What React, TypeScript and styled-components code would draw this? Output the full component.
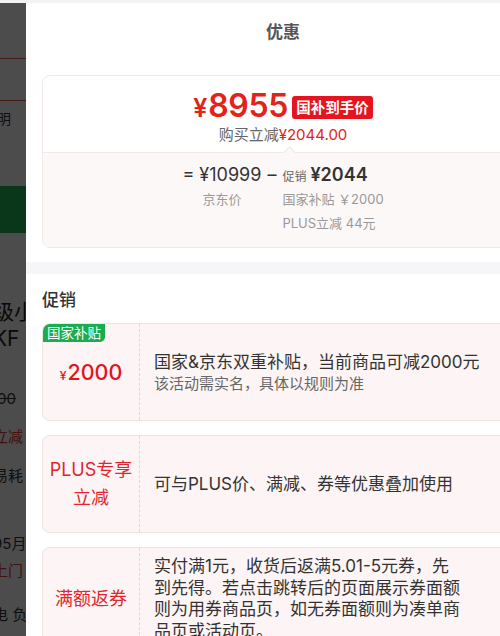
import styled, { createGlobalStyle } from "styled-components";

const GlobalStyle = createGlobalStyle`
  html, body {
    margin: 0;
    padding: 0;
    height: 100%;
    overflow: hidden;
    background: #f3f3f3;
    font-family: Inter, "Noto Sans CJK SC", sans-serif;
  }
`;

// Product page behind the drawer (only a thin strip shows)
const Page = styled.div`
  margin: 3px 0 0 -7px;
  height: 633px;
  background: #fff;
  overflow: hidden;
`;

const PageBar = styled.div<{ $h: number }>`
  height: ${({ $h }) => $h}px;
  border-bottom: 1px solid #ea5a55;
  box-sizing: border-box;
`;

const PageText = styled.div<{ $mt: number; $red?: boolean; $strike?: boolean; $size?: number; $indent?: number }>`
  margin-top: ${({ $mt }) => $mt}px;
  text-indent: ${({ $indent }) => $indent || 0}px;
  font-size: ${({ $size }) => $size || 15}px;
  line-height: 22px;
  height: 22px;
  color: ${({ $red }) => ($red ? "#e4393c" : "#333")};
  text-decoration: ${({ $strike }) => ($strike ? "line-through" : "none")};
  white-space: nowrap;
`;

const PageTitle = styled.div<{ $mt: number }>`
  margin-top: ${({ $mt }) => $mt}px;
  font-size: 21px;
  line-height: 27px;
  height: 27px;
  color: #222;
  white-space: nowrap;
`;

const BuyButton = styled.div`
  margin-top: 56px;
  height: 47px;
  background: #22b455;
`;

const Overlay = styled.div`
  position: fixed;
  top: 3px;
  left: 0;
  right: 0;
  bottom: 0;
  background: rgba(0, 0, 0, 0.7);
`;

// Drawer
const Drawer = styled.aside`
  position: fixed;
  top: 3px;
  left: 26px;
  bottom: 0;
  width: 514px;
  background: #fff;
  display: flex;
  flex-direction: column;
  overflow: hidden;
`;

const DrawerHeader = styled.header`
  height: 58px;
  box-sizing: border-box;
  padding-bottom: 4px;
  flex-shrink: 0;
  display: flex;
  align-items: center;
  justify-content: center;
  font-size: 17px;
  font-weight: 700;
  color: #555;
`;

const PriceSection = styled.section`
  padding: 14px 16px;
  flex-shrink: 0;
`;

const PriceCard = styled.div`
  border: 1px solid #f3e8e8;
  border-radius: 8px;
`;

const PriceTop = styled.div`
  padding: 12px 0 8px;
  display: flex;
  flex-direction: column;
  align-items: center;
`;

const PriceLine = styled.div`
  height: 38px;
  display: flex;
  align-items: center;
`;

const PriceValue = styled.span`
  color: #e2231a;
  font-size: 32px;
  font-weight: 600;
  line-height: 38px;
  letter-spacing: -0.3px;

  small {
    font-size: 25px;
    margin-right: 1px;
  }
`;

const Badge = styled.span`
  margin-left: 4px;
  height: 23px;
  line-height: 23px;
  padding: 0 4px;
  background: #e5141e;
  color: #fff;
  font-size: 14.5px;
  font-weight: 700;
  border-radius: 3px;
`;

const SaveLine = styled.div`
  font-size: 15px;
  line-height: 18px;
  height: 18px;
  color: #666;

  span {
    color: #e2231a;
  }
`;

const Breakdown = styled.div`
  position: relative;
  background: #fdf8f8;
  border-top: 1px solid #f5e8e8;
  border-radius: 0 0 7px 7px;
  padding: 10px 0 12px;
  display: flex;
  justify-content: center;
  align-items: flex-start;

  &::before {
    content: "";
    position: absolute;
    top: -5px;
    left: calc(50% + 2px);
    width: 8px;
    height: 8px;
    background: #fdf8f8;
    border-top: 1px solid #f2e4e4;
    border-left: 1px solid #f2e4e4;
    transform: rotate(45deg);
  }
`;

const BreakCol = styled.div<{ $center?: boolean }>`
  display: flex;
  flex-direction: column;
  align-items: ${({ $center }) => ($center ? "center" : "flex-start")};
`;

const BigNum = styled.div<{ $bold?: boolean }>`
  display: flex;
  align-items: baseline;
  height: 24px;
  font-size: 18px;
  line-height: 24px;
  color: #333;
  font-weight: ${({ $bold }) => ($bold ? 600 : 400)};
  white-space: nowrap;

  small {
    font-size: 12px;
    line-height: 1;
    font-weight: 400;
    color: #666;
    margin-right: 4px;
  }
`;

const Minus = styled.div`
  font-size: 18px;
  line-height: 24px;
  height: 24px;
  color: #333;
  margin: 0 6px;
`;

const Caption = styled.div`
  font-size: 13px;
  line-height: 24px;
  height: 24px;
  color: #999;
  white-space: nowrap;
`;

const SectionDivider = styled.div`
  height: 12px;
  flex-shrink: 0;
  background: #f6f6f8;
`;

const PromoSection = styled.section`
  padding: 14px 16px 0;
`;

const SectionTitle = styled.h3`
  margin: 0 0 11px;
  height: 24px;
  font-size: 17px;
  font-weight: 500;
  line-height: 24px;
  color: #333;
`;

const PromoList = styled.div`
  display: flex;
  flex-direction: column;
  gap: 14px;
`;

const PromoCard = styled.div`
  position: relative;
  display: flex;
  min-height: 98px;
  box-sizing: border-box;
  border: 1px solid #f4e2e2;
  border-radius: 8px;
  background: #fdf5f5;
  overflow: hidden;
  flex-shrink: 0;
`;

const PromoTag = styled.span`
  position: absolute;
  top: 0;
  left: 0;
  height: 18px;
  line-height: 18px;
  padding: 0 4px;
  background: #1bab50;
  color: #fff;
  font-size: 13.5px;
  border-bottom-right-radius: 5px;
`;

const PromoLabel = styled.div`
  width: 96px;
  flex-shrink: 0;
  border-right: 1px dashed #e8d2d2;
  display: flex;
  align-items: center;
  justify-content: center;
  text-align: center;
  color: #e3262e;
  font-size: 18px;
  line-height: 28px;
`;

const PromoAmount = styled.span`
  font-size: 21.5px;
  font-weight: 500;
  color: #e2141e;
  margin-top: 4px;

  small {
    font-size: 12px;
    margin-right: 1px;
  }
`;

const PromoBody = styled.div`
  width: 310px;
  padding: 8px 0 8px 14px;
  display: flex;
  flex-direction: column;
  justify-content: center;
`;

const PromoTitle = styled.div`
  height: 22px;
  font-size: 17px;
  line-height: 22px;
  color: #333;
  white-space: nowrap;
`;

const PromoSub = styled.div`
  height: 21px;
  font-size: 15px;
  line-height: 21px;
  color: #666;
`;

const PromoText = styled.div`
  font-size: 17px;
  line-height: 21.5px;
  color: #333;
`;

export default function App() {
  return (
    <>
      <GlobalStyle />
      <Page>
        <PageBar $h={56} />
        <PageBar $h={42} />
        <PageText $mt={7} $size={14} $indent={-10}>说明</PageText>
        <BuyButton />
        <PageTitle $mt={65}>级小米</PageTitle>
        <PageTitle $mt={0}>KF</PageTitle>
        <PageText $mt={36} $strike>.00</PageText>
        <PageText $mt={16} $red>立减</PageText>
        <PageText $mt={17}>易耗</PageText>
        <PageText $mt={46}>95月</PageText>
        <PageText $mt={5} $red>上门</PageText>
        <PageText $mt={22}>电 负</PageText>
        <PageText $mt={22}>电 负</PageText>
      </Page>
      <Overlay />

      <Drawer>
        <DrawerHeader>优惠</DrawerHeader>

        <PriceSection>
          <PriceCard>
            <PriceTop>
              <PriceLine>
                <PriceValue><small>¥</small>8955</PriceValue>
                <Badge>国补到手价</Badge>
              </PriceLine>
              <SaveLine>购买立减<span>¥2044.00</span></SaveLine>
            </PriceTop>
            <Breakdown>
              <BreakCol $center>
                <BigNum>= ¥10999</BigNum>
                <Caption>京东价</Caption>
              </BreakCol>
              <Minus>–</Minus>
              <BreakCol>
                <BigNum $bold><small>促销</small>¥2044</BigNum>
                <Caption>国家补贴 ￥2000</Caption>
                <Caption>PLUS立减 44元</Caption>
              </BreakCol>
            </Breakdown>
          </PriceCard>
        </PriceSection>

        <SectionDivider />

        <PromoSection>
          <SectionTitle>促销</SectionTitle>
          <PromoList>
            <PromoCard>
              <PromoTag>国家补贴</PromoTag>
              <PromoLabel>
                <PromoAmount><small>¥</small>2000</PromoAmount>
              </PromoLabel>
              <PromoBody>
                <PromoTitle>国家&amp;京东双重补贴，当前商品可减2000元</PromoTitle>
                <PromoSub>该活动需实名，具体以规则为准</PromoSub>
              </PromoBody>
            </PromoCard>

            <PromoCard>
              <PromoLabel>PLUS专享<br />立减</PromoLabel>
              <PromoBody>
                <PromoTitle>可与PLUS价、满减、券等优惠叠加使用</PromoTitle>
              </PromoBody>
            </PromoCard>

            <PromoCard>
              <PromoLabel>满额返券</PromoLabel>
              <PromoBody>
                <PromoText>
                  实付满1元，收货后返满5.01-5元券，先到先得。若点击跳转后的页面展示券面额则为用券商品页，如无券面额则为凑单商品页或活动页。
                </PromoText>
              </PromoBody>
            </PromoCard>
          </PromoList>
        </PromoSection>
      </Drawer>
    </>
  );
}
